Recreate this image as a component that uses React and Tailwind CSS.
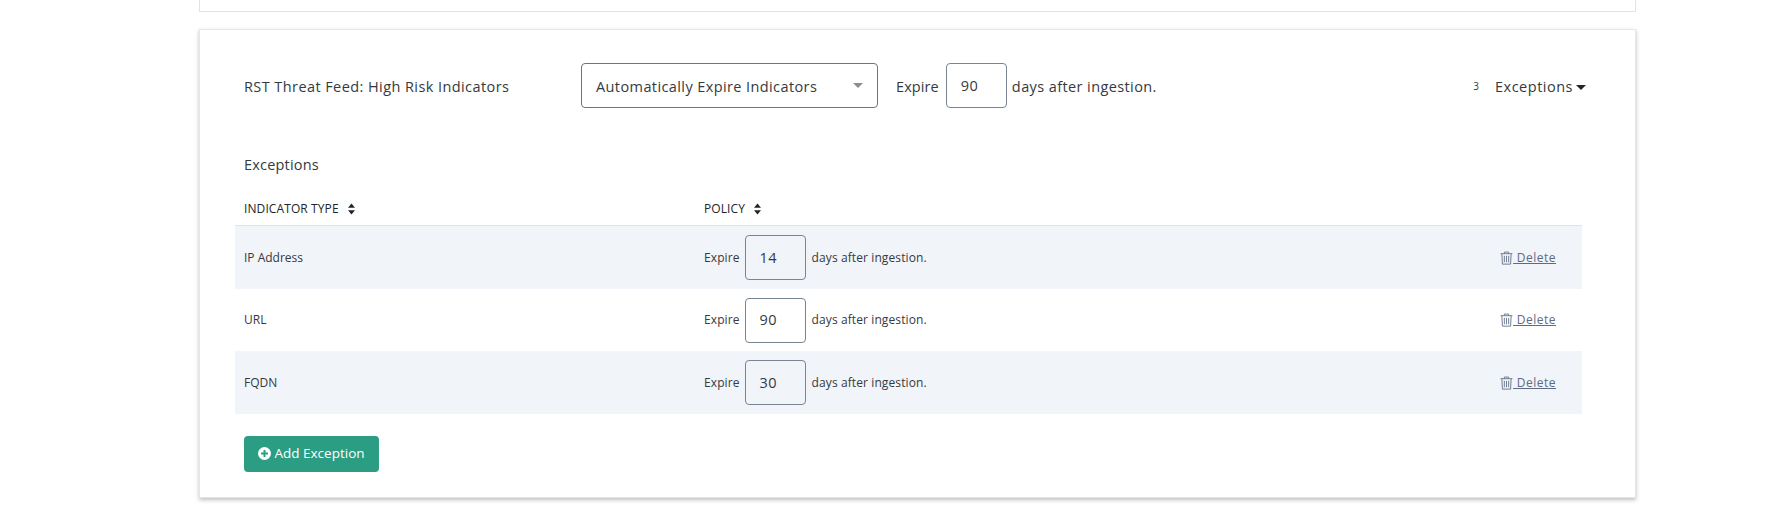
import React from "react";

function SortIcon() {
  return (
    <svg viewBox="0 0 8 12" className="w-[9px] h-[12px] ml-[8px] fill-current text-[#212529]">
      <path d="M4 0.5 L7.5 4.8 H0.5 Z" />
      <path d="M4 11.5 L7.5 7.2 H0.5 Z" />
    </svg>
  );
}

function TrashIcon() {
  return (
    <svg viewBox="0 0 12 13" className="w-[13px] h-[14px] fill-none stroke-current" strokeWidth="0.8">
      <path d="M0.5 2.5 H11.5 M4 2.5 V1 H8 V2.5 M1.7 2.5 L2.2 12.2 H9.8 L10.3 2.5 M4 4.5 V10.5 M6 4.5 V10.5 M8 4.5 V10.5" />
    </svg>
  );
}

function DaysInput({ value }) {
  return (
    <div className="w-[61px] h-[45px] border border-[#7b8494] rounded-[4px] pl-[14px] flex items-center text-[14.5px] tracking-[0.3px] text-[#343a40]">
      {value}
    </div>
  );
}

function ExceptionRow({ type, days, shaded, height }) {
  return (
    <div className={`flex items-center pl-[9px] pr-[26px] ${height} ${shaded ? "bg-[#f1f4f9]" : "bg-white"}`}>
      <div className="w-[460px] text-[12px] text-[#343a40]">{type}</div>
      <div className="flex items-center text-[12px] text-[#343a40]">
        <span className="tracking-[0.1px]">Expire</span>
        <div className="ml-[5px] mr-[6px]">
          <DaysInput value={days} />
        </div>
        <span className="tracking-[0.1px]">days after ingestion.</span>
      </div>
      <a className="ml-auto flex items-center text-[12px] text-[#5d6b85]">
        <TrashIcon />
        <span className="underline whitespace-pre tracking-[0.5px]"> Delete</span>
      </a>
    </div>
  );
}

export default function App() {
  return (
    <div className="min-h-[509px] bg-white pl-[199px] w-[1770px] font-['Open_Sans',sans-serif] overflow-hidden">
      <div className="w-[1437px] h-[12px] bg-white border border-t-0 border-[#e3e3e3]" />

      <div className="w-[1437px] mt-[17px] h-[469px] bg-white border border-[#e6e6e6] shadow-[0_2px_4px_rgba(0,0,0,0.25)] pl-[44px] pr-[54px] pt-[33px]">
        <div className="flex items-center h-[45px] text-[14.5px] text-[#343a40]">
          <div className="w-[337px] mt-[2px] tracking-[0.42px]">RST Threat Feed: High Risk Indicators</div>
          <div className="w-[297px] h-[45px] border border-[#6c7585] rounded-[4px] pl-[14px] pr-[14px] flex items-center justify-between tracking-[0.4px]">
            <span className="mt-[2px]">Automatically Expire Indicators</span>
            <span className="w-0 h-0 border-x-[5px] border-x-transparent border-t-[5px] border-t-[#868e96]" />
          </div>
          <span className="ml-[18px] mr-[7px] mt-[2px] tracking-[0.1px]">Expire</span>
          <DaysInput value="90" />
          <span className="ml-[5px] mt-[2px] tracking-[0.4px]">days after ingestion.</span>
          <div className="ml-auto -mr-[5px] mt-[2px] flex items-center">
            <span className="text-[10px] mr-[16px]">3</span>
            <span className="tracking-[0.5px]">Exceptions</span>
            <span className="ml-[3px] mt-[1px] w-0 h-0 border-x-[5px] border-x-transparent border-t-[5px] border-t-[#212529]" />
          </div>
        </div>

        <h3 className="mt-[47px] text-[14.5px] font-medium tracking-[0.2px] leading-[20px] text-[#343a40]">Exceptions</h3>

        <div className="-ml-[9px] -mr-[1px] mt-[16px]">
          <div className="flex items-center h-[35px] pl-[9px] pt-[1px] border-b border-[#dfe4ea] text-[12px] font-medium tracking-[0.1px] text-[#212529] uppercase">
            <div className="w-[460px] flex items-center">
              Indicator Type
              <SortIcon />
            </div>
            <div className="flex items-center">
              Policy
              <SortIcon />
            </div>
          </div>
          <ExceptionRow type="IP Address" days="14" shaded height="h-[63px]" />
          <ExceptionRow type="URL" days="90" height="h-[62px]" />
          <ExceptionRow type="FQDN" days="30" shaded height="h-[63px]" />
        </div>

        <button className="mt-[22px] w-[135px] h-[36px] rounded-[4px] bg-[#2a9d83] text-white text-[13.5px] flex items-center justify-center gap-[3px] pb-[2px]">
          <svg viewBox="0 0 12 12" className="w-[13px] h-[13px]">
            <circle cx="6" cy="6" r="6" fill="#ffffff" />
            <path d="M6 2.8 V9.2 M2.8 6 H9.2" stroke="#2a9d83" strokeWidth="1.8" />
          </svg>
          Add Exception
        </button>
      </div>
    </div>
  );
}
